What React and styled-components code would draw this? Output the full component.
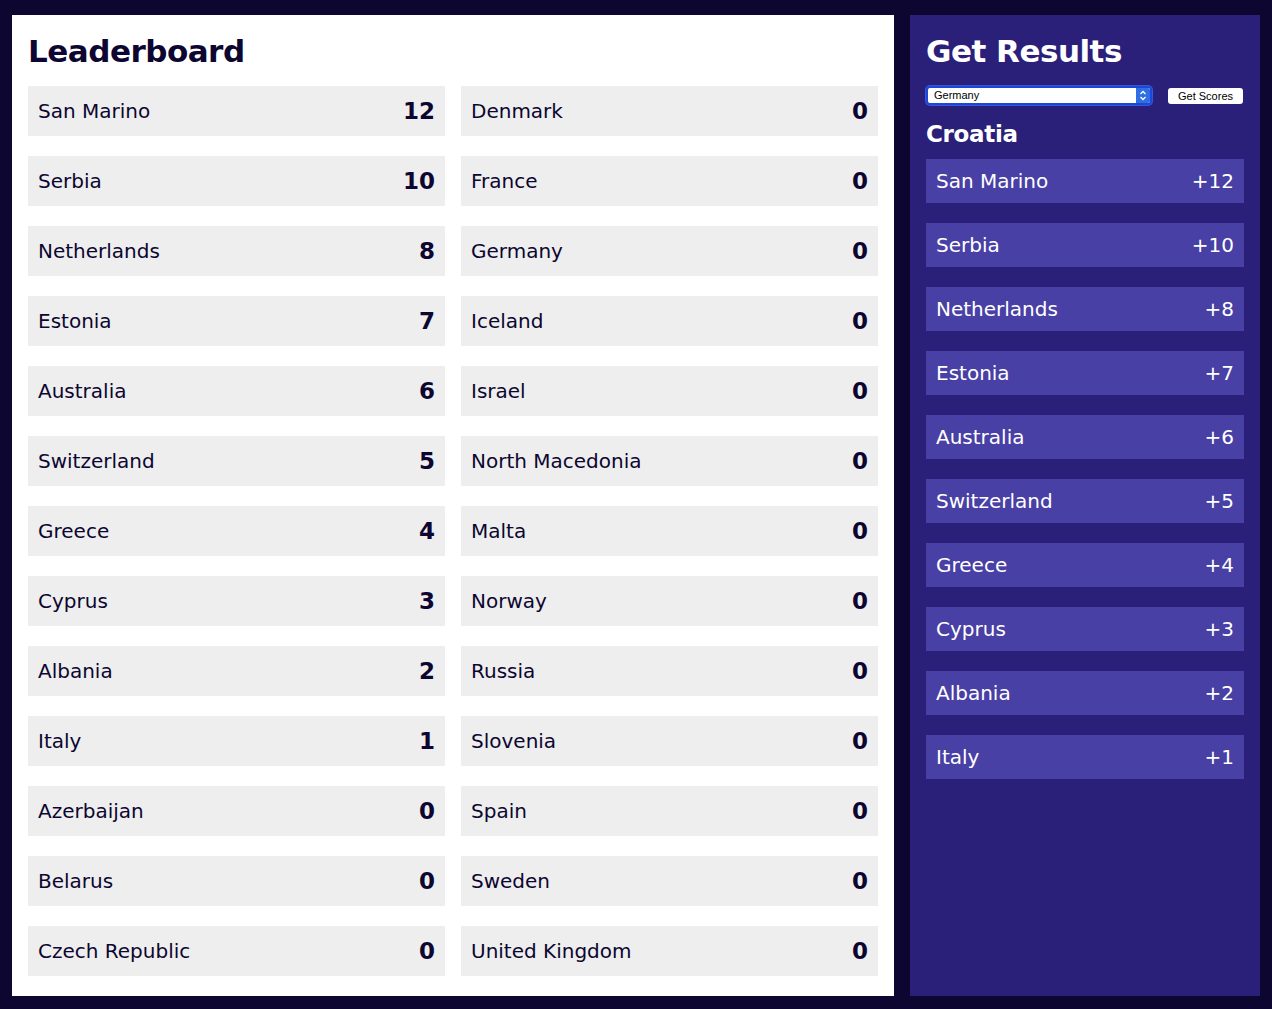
import React, { Component } from 'react'
import styled, { createGlobalStyle } from 'styled-components'

const GlobalStyle = createGlobalStyle`
body {
  margin: 0;
  background: #0c0630;
  font-family: "DejaVu Sans", "Liberation Sans", sans-serif;
}
`

const leaderboard = [
  ['San Marino', 12], ['Serbia', 10], ['Netherlands', 8], ['Estonia', 7],
  ['Australia', 6], ['Switzerland', 5], ['Greece', 4], ['Cyprus', 3],
  ['Albania', 2], ['Italy', 1], ['Azerbaijan', 0], ['Belarus', 0],
  ['Czech Republic', 0], ['Denmark', 0], ['France', 0], ['Germany', 0],
  ['Iceland', 0], ['Israel', 0], ['North Macedonia', 0], ['Malta', 0],
  ['Norway', 0], ['Russia', 0], ['Slovenia', 0], ['Spain', 0],
  ['Sweden', 0], ['United Kingdom', 0]
]

const results = leaderboard.slice(0, 10)

const Page = styled.div`
display: flex;
gap: 16px;
padding: 15px 12px 13px 12px;
min-height: 1009px;
box-sizing: border-box;
align-items: stretch;
`

const Board = styled.div`
flex: 1;
background: #ffffff;
padding: 16px 16px 20px 16px;
`

const Side = styled.div`
width: 350px;
flex-shrink: 0;
background: #2a207a;
padding: 16px;
box-sizing: border-box;
height: 981px;
`

const Title = styled.h1`
margin: 0 0 15px 0;
font-size: 31px;
line-height: 40px;
font-weight: 900;
letter-spacing: -0.5px;
color: ${props => props.light ? '#ffffff' : '#0c0630'};
`

const SubTitle = styled.h2`
margin: 14px 0 10px 0;
font-size: 23px;
line-height: 30px;
font-weight: 900;
letter-spacing: -0.3px;
color: #ffffff;
`

const Grid = styled.div`
display: grid;
grid-template-columns: 1fr 1fr;
grid-template-rows: repeat(13, 50px);
grid-auto-flow: column;
column-gap: 16px;
row-gap: 20px;
`

const Row = styled.div`
display: flex;
align-items: center;
justify-content: space-between;
padding: 0 10px;
background: #eeeeee;
color: #0c0630;
font-size: 20px;
`

const Score = styled.span`
font-weight: 900;
font-size: 23px;
`

const Controls = styled.div`
display: flex;
align-items: center;
justify-content: space-between;
padding-right: 1px;
`

const SelectWrap = styled.div`
position: relative;
width: 222px;
height: 15px;
border: 2px solid #1d47d6;
border-radius: 4px;
background: #ffffff;
box-shadow: 0 0 0 1px #3458d8;
`

const SelectBox = styled.select`
appearance: none;
display: block;
box-sizing: border-box;
border: none;
outline: none;
background: transparent;
width: 100%;
height: 15px;
line-height: 15px;
margin: 0;
padding: 0 0 0 6px;
font-family: "Liberation Sans", sans-serif;
font-size: 11px;
color: #000000;
`

const SelectArrow = styled.span`
position: absolute;
right: 0;
top: 0;
width: 14px;
height: 15px;
background: #2f6fe6;
border-radius: 0 2px 2px 0;
display: flex;
align-items: center;
justify-content: center;
pointer-events: none;
`

const ScoresButton = styled.button`
height: 16px;
width: 75px;
padding: 0;
border: none;
border-radius: 3px;
background: #ffffff;
font-family: "Liberation Sans", sans-serif;
font-size: 11px;
color: #000000;
`

const ResultList = styled.div`
display: flex;
flex-direction: column;
gap: 20px;
`

const ResultRow = styled.div`
display: flex;
align-items: center;
justify-content: space-between;
height: 44px;
padding: 0 10px;
background: #4840a5;
color: #ffffff;
font-size: 20px;
`

export default class App extends Component {
  state = {
    selected: 'Germany'
  }

  handleChange = (e) => {
    this.setState({ selected: e.target.value })
  }

  render() {
    const { selected } = this.state
    return (
      <Page>
        <GlobalStyle />
        <Board>
          <Title>Leaderboard</Title>
          <Grid>
            {leaderboard.map(([name, score]) => (
              <Row key={name}>
                <span>{name}</span>
                <Score>{score}</Score>
              </Row>
            ))}
          </Grid>
        </Board>
        <Side>
          <Title light>Get Results</Title>
          <Controls>
            <SelectWrap>
              <SelectBox value={selected} onChange={this.handleChange}>
                {leaderboard.map(([name]) => (
                  <option key={name} value={name}>{name}</option>
                ))}
              </SelectBox>
              <SelectArrow>
                <svg width="8" height="11" viewBox="0 0 8 11">
                  <path d="M1.5 4 L4 1.5 L6.5 4 M1.5 7 L4 9.5 L6.5 7" stroke="#ffffff" strokeWidth="1.3" fill="none" />
                </svg>
              </SelectArrow>
            </SelectWrap>
            <ScoresButton type='button'>Get Scores</ScoresButton>
          </Controls>
          <SubTitle>Croatia</SubTitle>
          <ResultList>
            {results.map(([name, score]) => (
              <ResultRow key={name}>
                <span>{name}</span>
                <span>+{score}</span>
              </ResultRow>
            ))}
          </ResultList>
        </Side>
      </Page>
    )
  }
}
